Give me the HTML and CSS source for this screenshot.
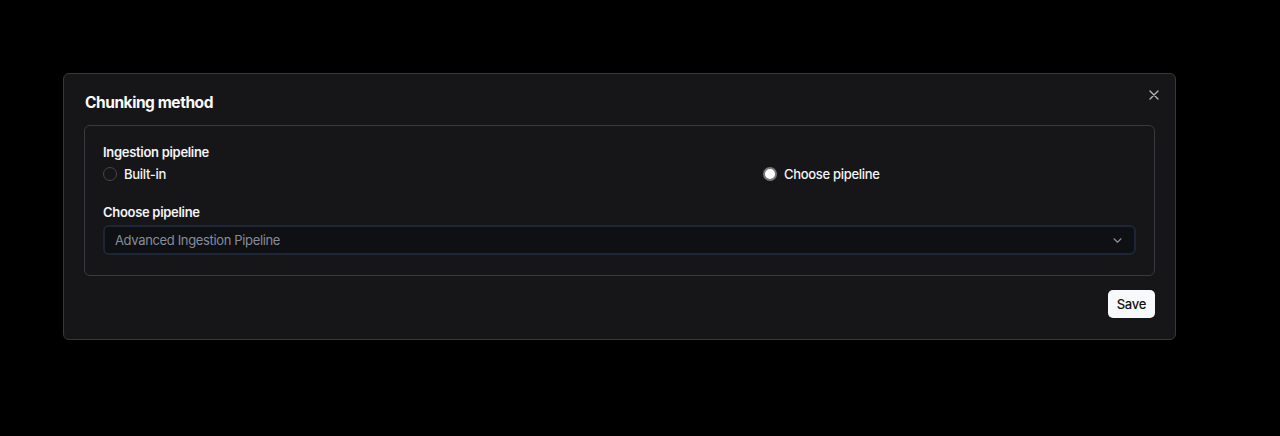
FILE: index.html
```html
<!DOCTYPE html>
<html lang="en">
<head>
<meta charset="utf-8">
<title>Chunking method</title>
<link rel="stylesheet" href="styles.css">
</head>
<body>
<div class="dialog">
  <button class="close" aria-label="Close">
    <svg width="10" height="10" viewBox="0 0 10 10"><path d="M1 1L9 9M9 1L1 9" stroke="#b4b4b8" stroke-width="1.4" stroke-linecap="round"/></svg>
  </button>
  <h2 class="title">Chunking method</h2>
  <div class="card">
    <div class="label">Ingestion pipeline</div>
    <div class="radios">
      <label class="radio"><span class="dot"></span><span>Built-in</span></label>
      <label class="radio"><span class="dot checked"></span><span>Choose pipeline</span></label>
    </div>
    <div class="label second">Choose pipeline</div>
    <div class="select">
      <span class="placeholder">Advanced Ingestion Pipeline</span>
      <svg width="9" height="5" viewBox="0 0 9 5"><path d="M1 0.8L4.5 4.2L8 0.8" fill="none" stroke="#8a8f99" stroke-width="1.2" stroke-linecap="round" stroke-linejoin="round"/></svg>
    </div>
  </div>
  <div class="footer">
    <button class="save">Save</button>
  </div>
</div>
</body>
</html>
```
FILE: styles.css
```css
* { box-sizing: border-box; }
body {
  margin: 0;
  background: #000;
  font-family: Inter, "Noto Sans", sans-serif;
  color: #f4f4f5;
}
.dialog {
  position: relative;
  width: 1113px;
  margin: 73px 0 0 63px;
  background: #161618;
  border: 1px solid #38383c;
  border-radius: 6px;
  padding: 18px 20px 21px;
}
.close {
  position: absolute;
  top: 15px;
  right: 15px;
  width: 12px;
  height: 12px;
  padding: 0;
  border: 0;
  background: none;
  display: flex;
  align-items: center;
  justify-content: center;
}
.title {
  margin: 0 0 0 1px;
  font-size: 15.5px;
  line-height: 21px;
  font-weight: 700;
  letter-spacing: -0.45px;
  color: #fafafa;
}
.card {
  margin-top: 12px;
  border: 1px solid #3a3a3e;
  border-radius: 6px;
  padding: 16px 18px 20px;
}
.label {
  font-size: 13px;
  line-height: 20px;
  font-weight: 600;
  letter-spacing: -0.3px;
  color: #f4f4f5;
}
.label.second { margin-top: 18px; }
.radios {
  margin-top: 2px;
  display: grid;
  grid-template-columns: 660px 1fr;
  height: 20px;
  align-items: center;
}
.radio {
  display: flex;
  align-items: center;
  gap: 7px;
  font-size: 13px;
  font-weight: 500;
  letter-spacing: -0.3px;
  color: #f4f4f5;
}
.dot {
  width: 14px;
  height: 14px;
  border-radius: 50%;
  border: 1px solid #45454a;
  flex: none;
}
.dot.checked {
  border: 2px solid #77777c;
  background: #ffffff;
}
.select {
  margin-top: 3px;
  height: 30px;
  border: 2px solid #1c2637;
  border-radius: 6px;
  background: #0f1013;
  display: flex;
  align-items: center;
  justify-content: space-between;
  padding: 0 12px 0 10px;
}
.placeholder {
  font-size: 13px;
  letter-spacing: -0.35px;
  color: #868d9a;
}
.footer {
  display: flex;
  justify-content: flex-end;
  margin-top: 14px;
}
.save {
  width: 47px;
  height: 28px;
  border: 0;
  border-radius: 5px;
  background: #f8f9fb;
  color: #111;
  font-family: Inter, "Noto Sans", sans-serif;
  font-size: 13px;
  font-weight: 500;
  letter-spacing: -0.2px;
  padding: 0;
}
```
